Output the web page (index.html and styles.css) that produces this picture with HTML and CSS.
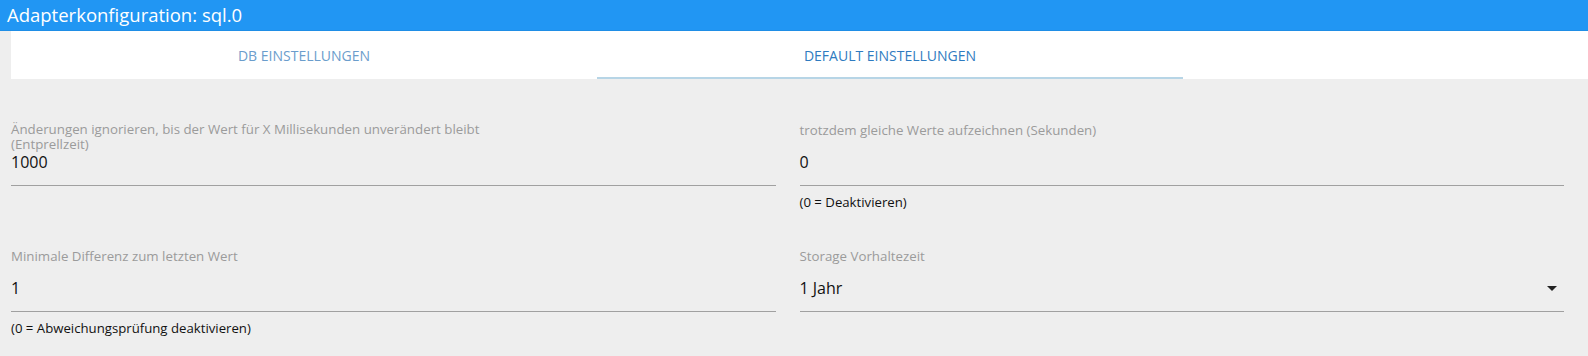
FILE: index.html
```html
<!DOCTYPE html>
<html lang="de">
<head>
<meta charset="utf-8">
<title>Adapterkonfiguration: sql.0</title>
<link rel="stylesheet" href="styles.css">
</head>
<body>
<header class="appbar">Adapterkonfiguration: sql.0</header>
<nav class="tabs">
  <div class="tab">DB EINSTELLUNGEN</div>
  <div class="tab tab-active">DEFAULT EINSTELLUNGEN</div>
</nav>
<main class="form">
  <div class="field">
    <div class="field-main">
      <label class="field-label field-label-double">Änderungen ignorieren, bis der Wert für X Millisekunden unverändert bleibt<br>(Entprellzeit)</label>
      <div class="field-input field-input-tight"><span class="value">1000</span></div>
    </div>
  </div>
  <div class="field">
    <div class="field-main">
      <label class="field-label">trotzdem gleiche Werte aufzeichnen (Sekunden)</label>
      <div class="field-input"><span class="value">0</span></div>
    </div>
    <div class="helper">(0 = Deaktivieren)</div>
  </div>
  <div class="field">
    <div class="field-main">
      <label class="field-label">Minimale Differenz zum letzten Wert</label>
      <div class="field-input"><span class="value">1</span></div>
    </div>
    <div class="helper">(0 = Abweichungsprüfung deaktivieren)</div>
  </div>
  <div class="field">
    <div class="field-main">
      <label class="field-label">Storage Vorhaltezeit</label>
      <div class="field-input select"><span class="value">1 Jahr</span><span class="caret"></span></div>
    </div>
  </div>
</main>
</body>
</html>
```

FILE: styles.css
```css
* { box-sizing: border-box; }

html, body {
  margin: 0;
  padding: 0;
}

body {
  background: #eeeeee;
  font-family: "Open Sans", "Noto Sans", "Liberation Sans", sans-serif;
  color: rgba(0, 0, 0, 0.87);
  width: 1588px;
  height: 356px;
  overflow: hidden;
}

.appbar {
  height: 31px;
  background: #2196f3;
  border-bottom: 1px solid #1f8ee6;
  color: #ffffff;
  font-size: 18.5px;
  line-height: 29px;
  padding-left: 7px;
}

.tabs {
  margin-left: 11px;
  height: 48px;
  background: #ffffff;
  display: flex;
}

.tab {
  width: 586px;
  height: 48px;
  display: flex;
  align-items: center;
  justify-content: center;
  font-size: 14px;
  color: #6b9dcc;
  padding-top: 1px;
}

.tab-active {
  color: #2f7bc0;
  border-bottom: 2px solid #b7d5e6;
  padding-top: 3px;
}

.form {
  display: grid;
  grid-template-columns: 1fr 1fr;
  column-gap: 24px;
  row-gap: 39px;
  padding: 44px 24px 0 11px;
  align-items: start;
}

.field-main {
  height: 63px;
  display: grid;
  grid-template-rows: 63px;
}

.field-label {
  grid-area: 1 / 1;
  align-self: start;
  font-size: 13.3px;
  line-height: 15px;
  color: #9b9b9b;
}

.field-label-double {
  margin-top: -1px;
}

.field-input {
  grid-area: 1 / 1;
  align-self: end;
  height: 36px;
  padding-bottom: 11px;
  border-bottom: 1px solid #a0a0a0;
  display: flex;
  align-items: center;
}

.value {
  font-size: 16px;
  line-height: 24px;
  color: #111111;
}

.field-input-tight {
  height: 31px;
  padding-bottom: 15px;
}

.field-input-tight .value {
  line-height: 15px;
}

.select {
  justify-content: space-between;
}

.caret {
  width: 0;
  height: 0;
  border-left: 5px solid transparent;
  border-right: 5px solid transparent;
  border-top: 5px solid #222222;
  margin-right: 7px;
}

.helper {
  margin-top: 9px;
  font-size: 13.2px;
  line-height: 15px;
  color: #111111;
}
```
